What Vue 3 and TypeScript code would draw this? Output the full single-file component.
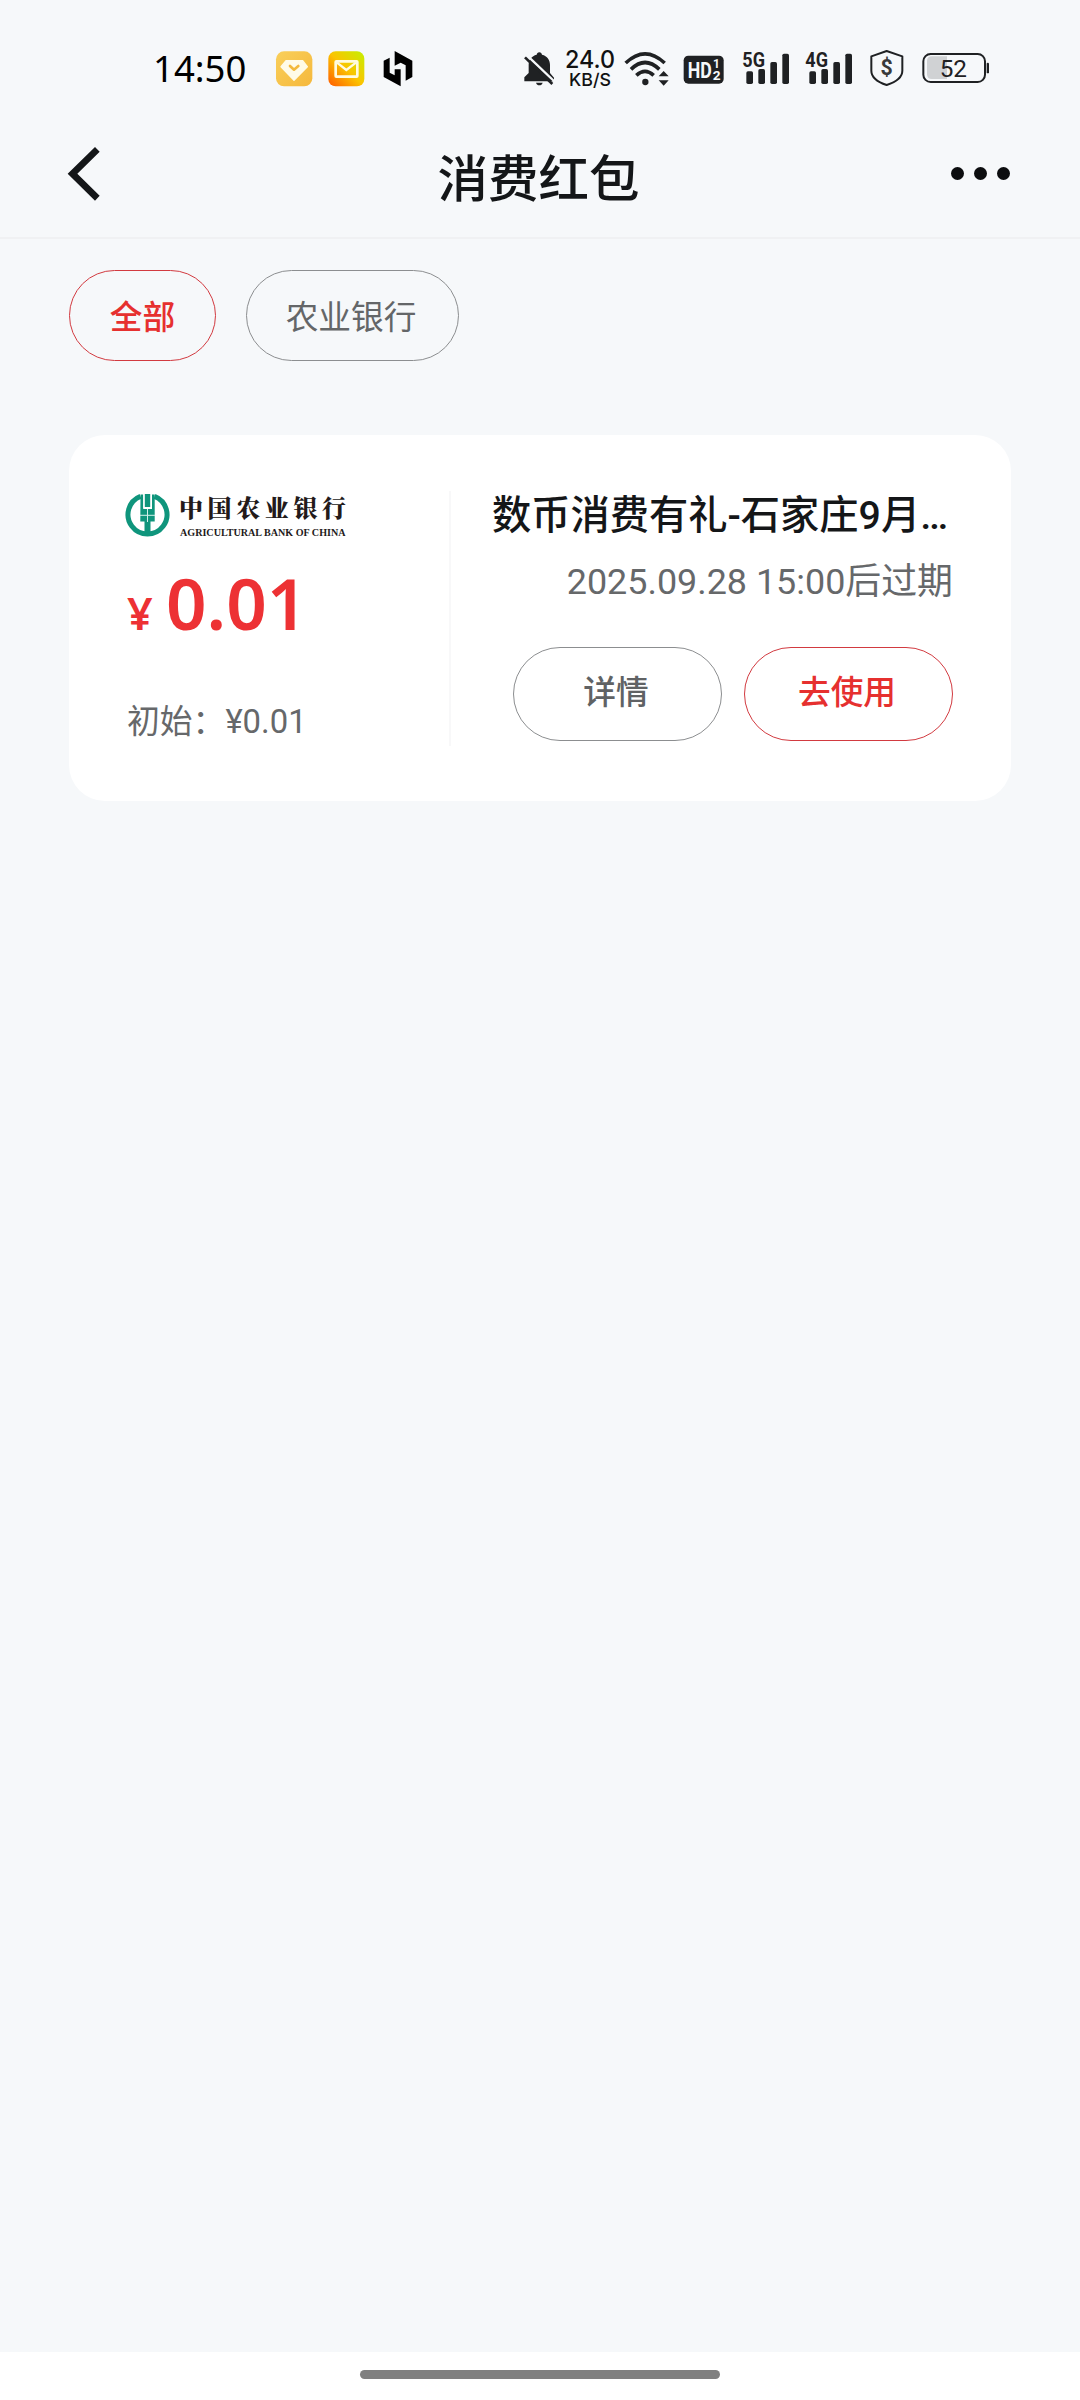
<script setup lang="ts">
interface Chip {
  label: string
  active: boolean
}

interface Coupon {
  title: string
  expiry: string
  amount: string
  initial: string
}

const chips: Chip[] = [
  { label: '全部', active: true },
  { label: '农业银行', active: false },
]

const coupons: Coupon[] = [
  {
    title: '数币消费有礼-石家庄9月红包活动',
    expiry: '2025.09.28 15:00后过期',
    amount: '0.01',
    initial: '¥0.01',
  },
]

const networks: string[] = ['5G', '4G']
</script>

<template>
  <div class="screen">
    <header class="status">
      <span class="time">14:50</span>
      <svg class="app-gem" width="37" height="36" viewBox="407 62 111 108">
        <defs>
          <linearGradient id="gem" x1="0" y1="0" x2="1" y2="1">
            <stop offset="0" stop-color="#f9cf5a" />
            <stop offset="1" stop-color="#f5b83c" />
          </linearGradient>
        </defs>
        <rect x="407" y="63" width="109" height="105" rx="24" fill="url(#gem)" />
        <path d="M437 91h50l14 18-40 41-39-41z" fill="#fffbe8" stroke="#fffbe8" stroke-width="4" stroke-linejoin="round" />
        <path d="M449 107l12 11 13-11" fill="none" stroke="#f3b93c" stroke-width="8" stroke-linecap="round" stroke-linejoin="round" />
      </svg>
      <svg class="app-mail" width="37" height="36" viewBox="563 62 111 108">
        <defs>
          <linearGradient id="mail" x1="0" y1="1" x2="1" y2="0">
            <stop offset="0" stop-color="#ff5a00" />
            <stop offset=".5" stop-color="#fbc400" />
            <stop offset="1" stop-color="#c4f000" />
          </linearGradient>
        </defs>
        <rect x="564" y="63" width="108" height="105" rx="22" fill="url(#mail)" />
        <rect x="586" y="93" width="65" height="46" rx="2" fill="none" stroke="#fffbe0" stroke-width="8" />
        <path d="M590 97l28 22 29-22" fill="none" stroke="#fffbe0" stroke-width="7" />
      </svg>
      <svg class="app-hex" width="30" height="36" viewBox="730 62 90 108">
        <path
          d="M765 62L818 91V140L798 151V105L783 97V168L732 140V91L750 82V127L765 135V117H783V97L765 106Z"
          fill="#000"
        />
      </svg>

      <svg class="bell" width="32" height="36" viewBox="68 62 96 108">
        <path
          d="M117 66c5 0 7 3 8 7 16 4 24 16 24 31v24l12 14v11H72v-12l13-13v-24c0-15 9-27 24-31 1-4 3-7 8-7z"
          fill="#1f2123"
        />
        <path d="M107 157h20c-2 6-5 8-10 8s-8-2-10-8z" fill="#1f2123" />
        <path d="M80 75l84 80" stroke="#f6f8fa" stroke-width="7" />
        <path d="M74 81l82 80" stroke="#1f2123" stroke-width="8" />
      </svg>
      <div class="speed">
        <svg width="52" height="22" viewBox="0 0 52 22">
          <text x="0" y="20" font-size="24" textLength="50" lengthAdjust="spacingAndGlyphs">24.0</text>
        </svg>
        <svg width="52" height="18" viewBox="0 0 52 18">
          <text x="4" y="16" font-size="17.500" textLength="42" lengthAdjust="spacingAndGlyphs">KB/S</text>
        </svg>
      </div>
      <svg class="wifi" width="46" height="36" viewBox="373 62 138 108">
        <g fill="none" stroke="#1f2123" stroke-width="11">
          <path d="M378 98Q436 43 495 98" />
          <path d="M394 117Q436 76 479 117" />
          <path d="M410 135Q436 111 462 135" />
        </g>
        <circle cx="437" cy="155" r="9.500" fill="#1f2123" />
        <path d="M492 122l15 16h-30zM492 166l15-16h-30z" fill="#1f2123" />
      </svg>
      <svg class="hd" width="42" height="30" viewBox="550 76 126 90">
        <rect x="552" y="78" width="120" height="84" rx="14" fill="#1f2123" />
        <g fill="#f6f8fa" font-family="Roboto, sans-serif" font-weight="700">
          <text x="564" y="144" font-size="65" textLength="72" lengthAdjust="spacingAndGlyphs">HD</text>
          <text x="640" y="116" font-size="36">1</text>
          <text x="639" y="152" font-size="41">2</text>
        </g>
      </svg>
      <svg v-for="net in networks" :key="net" class="signal" width="48" height="36" viewBox="36 60 144 108">
        <text x="37" y="111" font-size="61" textLength="68" lengthAdjust="spacingAndGlyphs">{{ net }}</text>
        <rect x="49" y="124" width="20" height="38" rx="5" />
        <rect x="85" y="117" width="20" height="45" rx="5" />
        <rect x="121" y="96" width="20" height="66" rx="5" />
        <rect x="157" y="71" width="20" height="91" rx="5" />
      </svg>
      <svg class="shield" width="36" height="38" viewBox="417 57 108 114">
        <path
          d="M470 63l47 16v43c0 20-20 34-47 43-27-9-46-23-46-43V79z"
          fill="none"
          stroke="#1f2123"
          stroke-width="6"
          stroke-linejoin="round"
        />
        <text x="470" y="136" font-size="64" font-weight="700" text-anchor="middle" fill="#3a3a3a">$</text>
      </svg>
      <svg class="battery" width="70" height="32" viewBox="572 66 210 96">
        <path d="M604 79h46v68h-46q-14 0-14-14V93q0-14 14-14z" fill="#d0d2d4" />
        <rect x="579" y="72" width="185" height="84" rx="22" fill="none" stroke="#1f2123" stroke-width="6" />
        <rect x="769" y="98" width="7" height="32" rx="3.500" fill="#1f2123" />
        <text x="669" y="140" font-size="70" text-anchor="middle" textLength="82" lengthAdjust="spacingAndGlyphs">52</text>
      </svg>
    </header>

    <nav class="navbar">
      <svg class="back" width="34" height="56" viewBox="82 48 102 168">
        <path d="M84 131L166 51l14 14-67 66 67 66-14 15z" fill="#141618" />
      </svg>
      <h1>消费红包</h1>
      <div class="more"><i></i><i></i><i></i></div>
    </nav>

    <div class="chips">
      <button v-for="chip in chips" :key="chip.label" class="chip" :class="{ active: chip.active }">
        {{ chip.label }}
      </button>
    </div>

    <section v-for="coupon in coupons" :key="coupon.title" class="card">
      <div class="left">
        <svg class="bank" width="224" height="46" viewBox="0 0 224 46">
          <path d="M15.500 3.300A19.500 19.500 0 1 0 29.500 3.300" fill="none" stroke="#0f957c" stroke-width="5" />
          <path
            d="M19.700 1h5.600v13h-5.600zM15.500 1.500h2.700v14.500h8.800V1.500h2.700v27h-4.200v12.500h-6V28.500h-4.200z"
            fill="#0f957c"
          />
          <path d="M15 22.300h15M22.500 16v13" stroke="#d4f0ea" stroke-width="1" />
          <path d="M18.900 1v14M26.200 1v14" stroke="#fff" stroke-width="1" />
          <text class="bank-cn" x="54" y="23.500" textLength="167" lengthAdjust="spacing">中国农业银行</text>
          <text class="bank-en" x="55" y="42.500" textLength="165.500" lengthAdjust="spacingAndGlyphs">AGRICULTURAL BANK OF CHINA</text>
        </svg>
        <p class="price"><span class="yen">¥</span><span class="num">{{ coupon.amount }}</span></p>
        <p class="initial">初始：{{ coupon.initial }}</p>
      </div>
      <div class="right">
        <h2>{{ coupon.title }}</h2>
        <p class="expiry">{{ coupon.expiry }}</p>
        <div class="actions">
          <button class="action">详情</button>
          <button class="action use">去使用</button>
        </div>
      </div>
    </section>

    <footer class="home"><span></span></footer>
  </div>
</template>

<style>
body {
  margin: 0;
  background: #f6f8fa;
}
</style>

<style scoped>
* {
  box-sizing: border-box;
}
.screen {
  width: 1080px;
  height: 2400px;
  display: flex;
  flex-direction: column;
  background: #f6f8fa;
  font-family: Roboto, 'Noto Sans CJK SC', sans-serif;
  color: #141618;
  overflow: hidden;
}
h1,
h2,
p {
  margin: 0;
}
svg {
  display: block;
  flex: none;
  overflow: visible;
}
button {
  font-family: inherit;
  background: transparent;
  padding: 0;
}

.status {
  height: 110px;
  display: flex;
  align-items: flex-start;
  padding-left: 153px;
  font-family: 'Noto Sans', sans-serif;
}
.time {
  width: 122px;
  margin-top: 44px;
  font-size: 36.500px;
  line-height: 49px;
  color: #000;
  white-space: nowrap;
}
.app-gem {
  margin: 51px 0 0 1px;
}
.app-mail {
  margin: 51px 0 0 15px;
}
.app-hex {
  margin: 51px 0 0 18px;
}
.bell {
  margin: 51px 0 0 110px;
}
.speed {
  width: 52px;
  margin: 48px 0 0 10px;
  font-family: Inter, sans-serif;
  font-weight: 500;
  fill: #111;
}
.wifi {
  margin: 51px 0 0 7px;
}
.hd {
  margin: 55px 0 0 13px;
}
.signal {
  margin: 50px 0 0 17px;
  font-family: Roboto, sans-serif;
  font-weight: 700;
  fill: #1f2123;
}
.signal + .signal {
  margin-left: 15px;
}
.shield {
  margin: 49px 0 0 16px;
  font-family: Roboto, sans-serif;
}
.battery {
  margin: 52px 0 0 16px;
  font-family: Roboto, sans-serif;
  fill: #1f2123;
}

.navbar {
  height: 129px;
  display: flex;
  align-items: flex-start;
  justify-content: space-between;
  padding: 0 70px 0 67px;
  border-bottom: 2px solid #f0f1f3;
}
.back {
  margin: 36px 44px 0 0;
}
h1 {
  margin: 33px 0 0;
  font-size: 50.500px;
  line-height: 74px;
  font-weight: 500;
}
.more {
  width: 78px;
  display: flex;
  justify-content: flex-end;
  gap: 10px;
  margin-top: 57px;
}
.more i {
  width: 13px;
  height: 13px;
  border-radius: 50%;
  background: #0c0d0f;
}

.chips {
  display: flex;
  gap: 30px;
  padding: 31px 69px 0;
}
.chip {
  width: 213px;
  height: 91px;
  padding: 0 3px 3px 0;
  border: 1.500px solid #8c8e90;
  border-radius: 46px;
  font-size: 32.700px;
  color: #646668;
}
.chip.active {
  width: 147px;
  padding-right: 0;
  border-color: #d23a40;
  color: #e6302f;
  font-weight: 500;
}

.card {
  width: 942px;
  height: 366px;
  margin: 74px 69px 0;
  padding: 56px 58px 0 56px;
  display: flex;
  background: #fff;
  border-radius: 36px;
}
.left {
  width: 326px;
  height: 255px;
  border-right: 2px solid #f8f8f9;
}
.bank {
  margin-top: 2px;
}
.bank-cn {
  font-family: 'Noto Serif CJK SC', 'Noto Sans CJK SC', serif;
  font-weight: 900;
  font-size: 24px;
  fill: #231a1a;
}
.bank-en {
  font-family: 'Liberation Serif', serif;
  font-weight: 700;
  font-size: 9.500px;
  fill: #231a1a;
}
.price {
  display: flex;
  align-items: baseline;
  margin: 15px 0 0 2px;
  height: 97px;
  line-height: 97px;
  font-family: 'Noto Sans', sans-serif;
  font-weight: 600;
  color: #ed3134;
  white-space: nowrap;
}
.yen {
  width: 39px;
  font-size: 45px;
}
.num {
  font-size: 71px;
}
.initial {
  margin: 47px 0 0 2px;
  font-size: 32.800px;
  line-height: 48px;
  color: #66686a;
  white-space: nowrap;
}
.right {
  width: 502px;
  padding-left: 41px;
}
h2 {
  width: 461px;
  margin-top: -3px;
  overflow: hidden;
  text-overflow: ellipsis;
  white-space: nowrap;
  font-size: 39.250px;
  line-height: 56px;
  font-weight: 500;
}
.expiry {
  margin-top: 12px;
  font-size: 35.900px;
  line-height: 52px;
  text-align: right;
  color: #66686a;
  white-space: nowrap;
}
.actions {
  display: flex;
  justify-content: flex-end;
  gap: 22px;
  margin-top: 39px;
}
.action {
  width: 209px;
  height: 94px;
  border: 1px solid #8c8e90;
  border-radius: 48px;
  padding: 0 3px 10px 0;
  font-size: 32.700px;
  font-weight: 500;
  color: #606264;
}
.action.use {
  border-color: #d23a40;
  color: #e6302f;
}

.home {
  height: 48px;
  margin-top: auto;
  padding-top: 18px;
  background: #fff;
}
.home span {
  display: block;
  width: 360px;
  height: 9px;
  margin: 0 auto;
  border-radius: 5px;
  background: #808080;
}
</style>
